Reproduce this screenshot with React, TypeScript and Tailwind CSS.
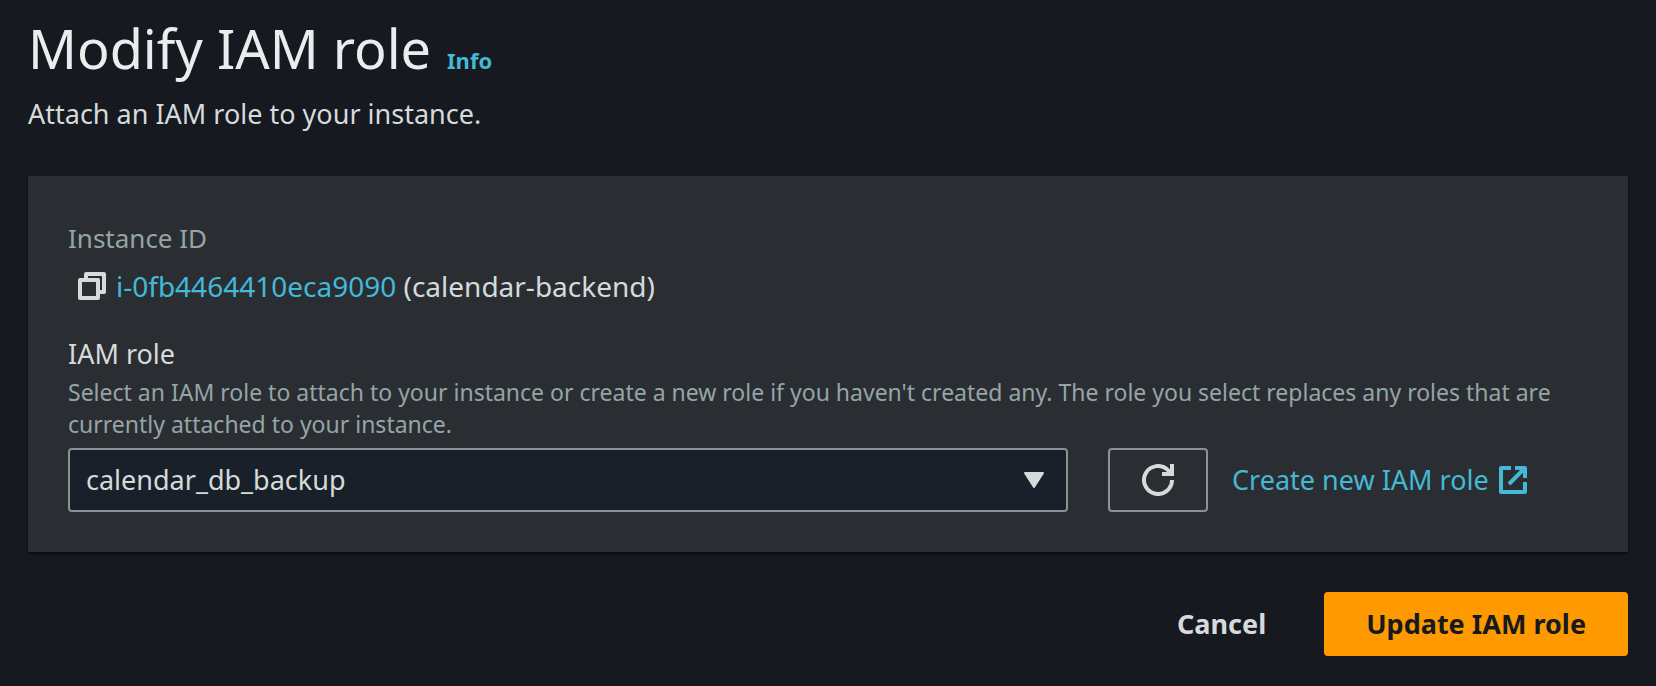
import React from "react";

export default function App() {
  return (
    <main className="min-h-screen bg-[#16191f] px-7 pt-5 pb-7 font-['Noto_Sans',sans-serif] text-[27px] leading-[44px] text-[#d5dbdb]">
      <header>
        <h1 className="flex items-baseline gap-4 text-[54px] leading-[56px] text-[#eaeded]">
          Modify IAM role
          <a href="#info" className="text-[22px] leading-8 font-bold text-[#44b9d6]">Info</a>
        </h1>
        <p className="mt-4">Attach an IAM role to your instance.</p>
      </header>

      <section className="mt-10 bg-[#2a2e33] px-10 py-10 shadow-[0_2px_2px_rgba(0,0,0,0.5)]">
        <dl>
          <dt className="text-[26px] text-[#95a5a6]">Instance ID</dt>
          <dd className="mt-1 flex items-center gap-2 text-[28px]">
            <button type="button" aria-label="Copy instance ID" className="ml-2">
              <svg viewBox="0 0 16 16" className="size-8" fill="none" stroke="currentColor" strokeWidth="2" strokeLinejoin="round">
                <path d="M2 5h9v9H2zM5 5V2h9v9h-3" />
              </svg>
            </button>
            <span>
              <a href="#instance" className="text-[#44b9d6]">i-0fb4464410eca9090</a> (calendar-backend)
            </span>
          </dd>
        </dl>

        <label htmlFor="role" className="mt-6 block">IAM role</label>
        <p className="text-[23px] leading-8 text-[#95a5a6]">
          Select an IAM role to attach to your instance or create a new role if you haven't created any. The role you select replaces any roles that are currently attached to your instance.
        </p>
        <div className="mt-2 flex items-center">
          <div className="relative max-w-[1000px] min-w-0 flex-1">
            <select id="role" className="h-16 w-full appearance-none rounded-sm border-2 border-[#879596] bg-[#1a2029] px-4">
              <option>calendar_db_backup</option>
            </select>
            <svg viewBox="0 0 20 16" className="pointer-events-none absolute top-6 right-6 h-4 w-5" fill="currentColor" stroke="currentColor" strokeWidth="2" strokeLinejoin="round">
              <path d="M1 1h18l-9 14z" />
            </svg>
          </div>
          <button type="button" aria-label="Refresh roles" className="ml-10 flex h-16 w-[100px] shrink-0 items-center justify-center rounded-sm border-2 border-[#879596]">
            <svg viewBox="0 0 16 16" className="size-8" fill="none" stroke="currentColor" strokeWidth="2">
              <path d="M15 0v5h-5M15 8a7 7 0 1 1-2.05-4.95L15 5" />
            </svg>
          </button>
          <a href="#create" className="ml-6 flex items-center gap-2 text-[#44b9d6]">
            Create new IAM role
            <svg viewBox="0 0 16 16" className="size-8" fill="none" stroke="currentColor" strokeWidth="2" strokeLinejoin="round">
              <path d="M7 2H2v12h12V9M9 2h5v5M6 10l8-8" />
            </svg>
          </a>
        </div>
      </section>

      <footer className="mt-10 flex justify-end gap-4 font-bold">
        <button type="button" className="h-16 px-[42px]">Cancel</button>
        <button type="button" className="h-16 rounded-sm bg-[#ff9900] px-[42px] text-[#16191f]">Update IAM role</button>
      </footer>
    </main>
  );
}
